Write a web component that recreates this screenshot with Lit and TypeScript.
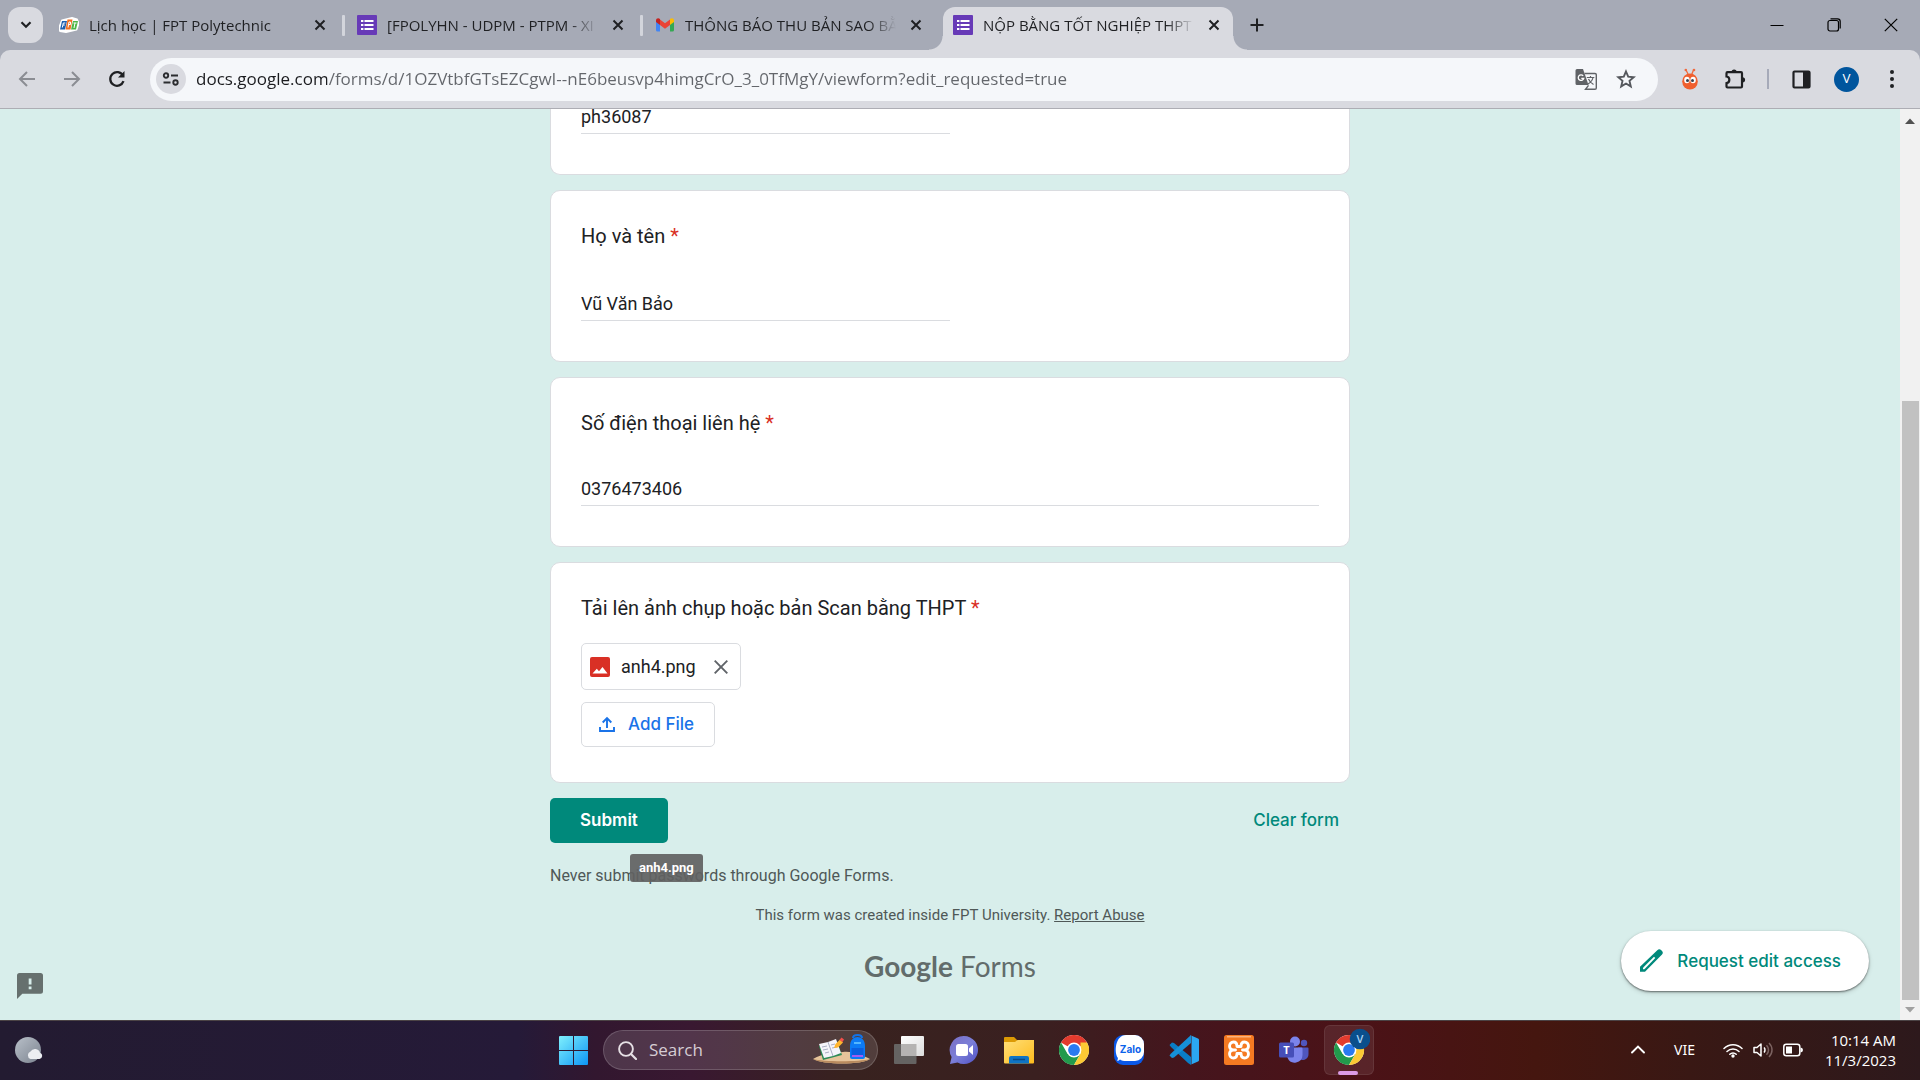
import { LitElement, html, svg, css, type TemplateResult } from "lit";
import { customElement } from "lit/decorators.js";
import { classMap } from "lit/directives/class-map.js";

const icon = (w: number, h: number, body: TemplateResult, box = `0 0 ${w} ${h}`) =>
  html`<svg width=${w} height=${h} viewBox=${box} fill="none" aria-hidden="true">${body}</svg>`;

const cross = (size: number, width: number, color: string) =>
  icon(size, size, svg`<path d="M1.5 1.5L10.5 10.5M10.5 1.5L1.5 10.5" stroke=${color} stroke-width=${width}/>`, "0 0 12 12");

const formsIcon = icon(20, 20, svg`
  <rect width="20" height="20" rx="1" fill="#673ab7"/>
  <path d="M4 5h2.400v2H4zM4 9h2.400v2H4zM4 13h2.400v2H4zM7.500 5H16.500v2H7.500zM7.500 9H16.500v2H7.500zM7.500 13H16.500v2H7.500z" fill="#fff"/>`);

const fptIcon = icon(20, 20, svg`
  <path d="M3 5.500L13 3l5 1.500 1.500 4-2 6L7 17l-6-1-.5-4z" fill="#fff" stroke="#fff" stroke-width="2" stroke-linejoin="round"/>
  <path d="M3 6h5l-2 8.500H1z" fill="#1f5fae"/><path d="M8.500 4.500h5L11.500 14.500H6.500z" fill="#f26f21"/><path d="M14 6h5l-2 8.500h-5z" fill="#4eb748"/>
  <path d="M3.300 12.500l1-4.500h2M4 10h1.700M9 12.500l1-5.500h1.500v2.500H10M14.500 8h3M16 8l-1 5" stroke="#fff" stroke-width="1"/>`);

const gmailIcon = icon(20, 20, svg`
  <path d="M1 5v10a1.500 1.500 0 0 0 1.500 1.500H5V8z" fill="#4285f4"/>
  <path d="M19 5v10a1.500 1.500 0 0 1-1.500 1.500H15V8z" fill="#34a853"/>
  <path d="M5 4.500l5 3.800 5-3.800V10l-5 3.800L5 10z" fill="#ea4335"/>
  <path d="M1 5.500C1 3.300 3.300 2.600 5 4v6L1 7z" fill="#c5221f"/>
  <path d="M19 5.500c0-2.200-2.300-2.900-4-1.500v6l4-3z" fill="#fbbc04"/>`);

const chromeBody = svg`
  <circle cx="15" cy="15" r="15" fill="#fff"/>
  <path d="M15 15L2 7.500A15 15 0 0 1 28 7.500z" fill="#e33b2e"/>
  <path d="M2 7.500A15 15 0 0 0 15 30L21.500 18.800 15 15 8.500 18.700z" fill="#229a4c"/>
  <path d="M28 7.500A15 15 0 0 1 15 30L21.500 18.800 21.500 7.500z" fill="#fcc934"/>
  <circle cx="15" cy="15" r="7.400" fill="#fff"/><circle cx="15" cy="15" r="5.900" fill="#2a7af0"/>`;

interface Tab { title: string; icon: TemplateResult; active?: boolean; divided?: boolean }

const TABS: Tab[] = [
  { title: "Lịch học | FPT Polytechnic", icon: fptIcon, divided: true },
  { title: "[FPOLYHN - UDPM - PTPM - XI", icon: formsIcon, divided: true },
  { title: "THÔNG BÁO THU BẢN SAO BẰ", icon: gmailIcon },
  { title: "NỘP BẰNG TỐT NGHIỆP THPT", icon: formsIcon, active: true },
];

@customElement("browser-tabs")
export class BrowserTabs extends LitElement {
  static styles = css`
    :host { display: block; background: #a6aab6; font: 15px/20px "Open Sans", "Noto Sans", sans-serif; color: #1f2023; }
    button { border: 0; padding: 0; background: none; color: inherit; font: inherit; display: flex; align-items: center; justify-content: center; }
    .strip { display: flex; height: 50px; align-items: center; padding-left: 8px; }
    .search { width: 35px; height: 36px; border-radius: 12px; background: #d9dae0; margin-right: 6px; flex: none; }
    .tabs { display: flex; gap: 8px; align-self: stretch; padding-top: 7px; min-width: 0; }
    .tab { position: relative; width: 290px; box-sizing: border-box; display: flex; align-items: center; gap: 10px; padding: 0 9px 7px 10px; border-radius: 12px 12px 0 0; }
    .select { flex: 1; min-width: 0; gap: 10px; justify-content: flex-start; }
    .title { flex: 1; min-width: 0; overflow: hidden; white-space: nowrap; text-align: left; -webkit-mask-image: linear-gradient(to left, transparent 0, #000 28px); mask-image: linear-gradient(to left, transparent 0, #000 28px); }
    .close { width: 20px; height: 20px; }
    .divided::after { content: ""; position: absolute; right: -6px; top: 8px; width: 3px; height: 21px; border-radius: 1px; background: #d3d5dc; }
    .active { background: #d9dae0; }
    .active::before, .active::after { content: ""; position: absolute; bottom: 0; width: 14px; height: 14px; }
    .active::before { right: 100%; background: radial-gradient(circle at 0 0, transparent 13px, #d9dae0 14px); }
    .active::after { left: 100%; background: radial-gradient(circle at 100% 0, transparent 13px, #d9dae0 14px); }
    .new { width: 28px; height: 28px; margin-left: 10px; }
    .window { margin-left: auto; display: flex; align-self: stretch; padding-right: 1px; }
    .window button { width: 57px; }
  `;
  render() {
    return html`<div class="strip">
      <button class="search" aria-label="Search tabs">${icon(12, 8, svg`<path d="M1.500 1.200L6 5.700l4.500-4.500" stroke="#1f2023" stroke-width="2.200"/>`)}</button>
      <div class="tabs">
        ${TABS.map((t) => html`<div class=${classMap({ tab: true, active: !!t.active, divided: !!t.divided })}>
          <button class="select">${t.icon}<span class="title">${t.title}</span></button>
          <button class="close" aria-label="Close tab">${cross(12, 2, "#1f2023")}</button>
        </div>`)}
      </div>
      <button class="new" aria-label="New tab">${icon(14, 14, svg`<path d="M7 .5v13M.5 7h13" stroke="#1f2023" stroke-width="2"/>`)}</button>
      <div class="window">
        <button aria-label="Minimize">${icon(14, 14, svg`<path d="M.5 7.500h13" stroke="#000"/>`)}</button>
        <button aria-label="Restore">${icon(14, 14, svg`<rect x="1" y="2.500" width="10.500" height="10.500" rx="2" stroke="#000" stroke-width="1.200"/><path d="M3.500 .8h7a2.700 2.700 0 0 1 2.700 2.700v7" stroke="#000" stroke-width="1.200"/>`)}</button>
        <button aria-label="Close">${icon(14, 14, svg`<path d="M.8.8l12.400 12.400M13.200.8L.8 13.200" stroke="#000" stroke-width="1.200"/>`)}</button>
      </div>
    </div>`;
  }
}

@customElement("browser-toolbar")
export class BrowserToolbar extends LitElement {
  static styles = css`
    :host { display: block; background: #a6aab6; font: 17px/22px "Open Sans", "Noto Sans", sans-serif; }
    button { border: 0; padding: 0; background: none; display: flex; align-items: center; justify-content: center; flex: none; }
    .bar { display: flex; align-items: center; height: 58px; padding: 0 6px 0 4px; background: #d9dae0; border-radius: 10px 10px 0 0; border-bottom: 1px solid #adadb4; }
    .tool { width: 45px; height: 40px; }
    .omnibox { flex: 1; display: flex; align-items: center; height: 43px; margin: 0 9px 0 11px; padding: 0 12px 0 6px; border-radius: 22px; background: #f5f7fa; }
    .site { width: 30px; height: 30px; border-radius: 15px; background: #d9dae0; margin-right: 10px; }
    .url { flex: 1; min-width: 0; border: 0; padding: 0; outline: 0; font: inherit; color: transparent; background: linear-gradient(90deg, #1b1c1f 131px, #63666b 131px); -webkit-background-clip: text; background-clip: text; }
    .action { width: 40px; height: 30px; }
    .rule { width: 2px; height: 20px; margin: 0 10px; background: #a6aab9; }
    .avatar { width: 25px; height: 25px; border-radius: 13px; background: #00559d; color: #fff; font-size: 12px; line-height: 25px; text-align: center; }
  `;
  render() {
    return html`<div class="bar">
      <button class="tool" aria-label="Back">${icon(18, 16, svg`<path d="M17 8H2.500M9 1L2 8l7 7" stroke="#8b8d93" stroke-width="2"/>`)}</button>
      <button class="tool" aria-label="Forward">${icon(18, 16, svg`<path d="M1 8h14.500M9 1l7 7-7 7" stroke="#8b8d93" stroke-width="2"/>`)}</button>
      <button class="tool" aria-label="Reload">${icon(18, 18, svg`<path d="M15.500 11.200A6.800 6.800 0 1 1 15 5.600" stroke="#1f2023" stroke-width="2.300"/><path d="M16.500 1v6.500H10z" fill="#1f2023"/>`)}</button>
      <div class="omnibox">
        <button class="site" aria-label="View site information">${icon(18, 14, svg`<circle cx="4" cy="3.500" r="2.200" stroke="#2b2c2f" stroke-width="1.900"/><path d="M9 3.500h7M1.500 10.500h7" stroke="#2b2c2f" stroke-width="2"/><circle cx="13.500" cy="10.500" r="2.200" stroke="#2b2c2f" stroke-width="1.900"/>`)}</button>
        <input class="url" type="text" aria-label="Address" .value=${"docs.google.com/forms/d/1OZVtbfGTsEZCgwI--nE6beusvp4himgCrO_3_0TfMgY/viewform?edit_requested=true"}>
        <button class="action" aria-label="Translate">${icon(22, 21, svg`
          <path d="M2 0h6l5.500 16H2a1.500 1.500 0 0 1-1.500-1.500v-13A1.500 1.500 0 0 1 2 0z" fill="#606367"/>
          <path d="M9.500 4.500H20a1.300 1.300 0 0 1 1.300 1.300V19A1.300 1.300 0 0 1 20 20.300h-9.500l3-4" stroke="#606367" stroke-width="1.400"/>
          <path d="M8.200 6.800a2.800 2.800 0 1 0 .6 2.500H6.300" stroke="#fff" stroke-width="1.300"/>
          <path d="M11.800 8.500h7.500M15.500 7v1.500M18 8.500c-.6 3-2.500 5-5 6.500M13.500 10c1 2.500 2.500 4 5 5.500" stroke="#606367" stroke-width="1.200"/>`)}</button>
        <button class="action" aria-label="Bookmark this tab">${icon(20, 20, svg`<path d="M10 2.500l2.200 5.200 5.600.5-4.300 3.700 1.300 5.500L10 14.500l-4.800 2.900 1.300-5.500L2.200 8.200l5.600-.5z" stroke="#55585d" stroke-width="1.900"/>`)}</button>
      </div>
      <button class="tool" aria-label="Extension">${icon(18, 22, svg`
        <path d="M5 2l2.500 5M12.500 2L10.500 7" stroke="#f0693c" stroke-width="1.300"/><circle cx="4.800" cy="2" r="1.300" fill="#f0693c"/><circle cx="13" cy="2" r="1.300" fill="#f0693c"/>
        <ellipse cx="9" cy="13.500" rx="7.800" ry="8" fill="#f0602f"/><ellipse cx="5.900" cy="12" rx="2.700" ry="3.300" fill="#fff"/><ellipse cx="12.100" cy="12" rx="2.700" ry="3.300" fill="#fff"/>
        <circle cx="6.500" cy="12.500" r="1.500" fill="#39424e"/><circle cx="11.500" cy="12.500" r="1.500" fill="#39424e"/>`)}</button>
      <button class="tool" aria-label="Extensions">${icon(22, 22, svg`
        <path d="M3.500 4.200H17a1 1 0 0 1 1 1V18.500a1 1 0 0 1-1 1H3.500a1 1 0 0 1-1-1v-3.300c3.800-.4 3.800-6.300 0-6.700V5.200a1 1 0 0 1 1-1z" stroke="#1f2023" stroke-width="2.200"/>
        <path d="M7.500 4a2.600 2.600 0 0 1 5.200 0zM18.500 9.200a2.600 2.600 0 0 1 0 5.200z" fill="#1f2023"/>`)}</button>
      <span class="rule"></span>
      <button class="tool" aria-label="Side panel">${icon(19, 19, svg`<rect x="1.500" y="1.500" width="16" height="16" rx="1" stroke="#1f2023" stroke-width="2.200"/><path d="M11 1h6.500v17H11z" fill="#1f2023"/>`)}</button>
      <button class="tool" aria-label="Profile"><span class="avatar">V</span></button>
      <button class="tool" aria-label="Menu">${icon(6, 20, svg`<circle cx="3" cy="3" r="2" fill="#1f2023"/><circle cx="3" cy="10" r="2" fill="#1f2023"/><circle cx="3" cy="17" r="2" fill="#1f2023"/>`)}</button>
    </div>`;
  }
}

@customElement("form-page")
export class FormPage extends LitElement {
  static styles = css`
    :host { display: flex; position: relative; min-height: 0; overflow: hidden; background: #d8eeeb; font-family: Roboto, sans-serif; color: #202124; }
    button { font: 500 17px/24px "Inter", sans-serif; cursor: pointer; }
    .scroll { flex: 1; overflow: hidden; display: flex; justify-content: center; }
    .form { width: 800px; max-width: 100%; margin: -11px 0 0; }
    .card { box-sizing: border-box; border: 1px solid #dadce0; border-radius: 10px; background: #fff; padding: 33px 30px 40px; margin-bottom: 15px; }
    .cut { padding-top: 0; border-top: 0; border-radius: 0 0 10px 10px; }
    .upload { padding-bottom: 35px; }
    .label { display: block; font-size: 20px; line-height: 24px; margin-bottom: 37px; }
    .wide .label { margin-bottom: 35px; }
    .upload .label { margin-bottom: 23px; }
    .req { color: #d93025; }
    .answer { display: block; box-sizing: border-box; width: 50%; height: 36px; border: 0; border-bottom: 1px solid #dadce0; padding: 2px 0 0; outline: 0; font: 18px/24px Roboto, sans-serif; color: #202124; background: none; }
    .wide .answer { width: 100%; }
    .files { display: flex; flex-direction: column; align-items: flex-start; gap: 12px; }
    .chip { display: flex; align-items: center; box-sizing: border-box; height: 47px; padding: 0 7px 0 8px; border: 1px solid #dadce0; border-radius: 5px; font-size: 18px; }
    .chip-name { margin: 0 13px 0 11px; }
    .remove { display: flex; align-items: center; justify-content: center; width: 24px; height: 24px; border: 0; padding: 0; background: none; }
    .add { display: flex; align-items: center; gap: 12px; height: 45px; box-sizing: border-box; padding: 0 20px 2px 16px; border: 1px solid #dadce0; border-radius: 5px; background: #fff; color: #1a73e8; }
    .actions { display: flex; justify-content: space-between; }
    .submit { height: 45px; padding: 0 30px 2px; border: 0; border-radius: 5px; background: #00897b; color: #fff; font-weight: 600; }
    .clear { height: 45px; padding: 0 11px 2px; border: 0; background: none; color: #00897b; }
    .warning { position: relative; margin: 21px 0 15px; font-size: 16px; line-height: 24px; color: #4f5857; }
    .tip { position: absolute; left: 80px; top: -10px; padding: 0 9px; border-radius: 3px; background: rgba(97, 97, 97, 0.92); color: #fff; font-weight: 700; font-size: 13px; line-height: 28px; }
    .origin { margin: 0 0 19px; text-align: center; font-size: 15px; line-height: 24px; color: #4f5857; }
    .origin a { color: inherit; }
    .logo { display: block; text-align: center; text-decoration: none; color: #626c6b; font: 28px/40px "Lato", sans-serif; }
    .logo b { font-weight: 700; }
    .report { position: absolute; left: 17px; bottom: 21px; padding: 0; border: 0; background: none; display: flex; }
    .request { position: absolute; right: 51px; bottom: 29px; display: flex; align-items: center; gap: 14px; height: 60px; padding: 0 28px 0 18px; border: 0; border-radius: 30px; background: #fff; color: #00897b; box-shadow: 0 1px 2px rgba(0, 0, 0, 0.5), 0 2px 5px rgba(0, 0, 0, 0.15); }
    .track { width: 20px; flex: none; box-sizing: border-box; background: #f1f1f1; display: flex; flex-direction: column; align-items: center; padding: 9px 0 7px; }
    .track-gap { flex: 280 0 0; }
    .thumb { flex: 605 0 0; width: 17px; background: #c1c1c1; margin-bottom: 7px; }
  `;

  private text(id: string, label: string, value: string, wide = false) {
    return html`<div class=${classMap({ card: true, wide })}>
      <label class="label" for=${id}>${label} <span class="req">*</span></label>
      <input class="answer" id=${id} type="text" .value=${value}>
    </div>`;
  }

  render() {
    return html`
      <div class="scroll">
        <form class="form" @submit=${(e: Event) => e.preventDefault()}>
          <div class="card cut"><input class="answer" type="text" aria-label="MSSV" .value=${"ph36087"}></div>
          ${this.text("name", "Họ và tên", "Vũ Văn Bảo")}
          ${this.text("phone", "Số điện thoại liên hệ", "0376473406", true)}
          <div class="card upload">
            <label class="label" for="add">Tải lên ảnh chụp hoặc bản Scan bằng THPT <span class="req">*</span></label>
            <div class="files">
              <div class="chip">
                ${icon(20, 20, svg`<rect width="20" height="20" rx="2" fill="#d93025"/><path d="M2.500 16.500l4.300-4.700 2.200 2.400 3.500-4.200 5 6.500z" fill="#fff"/>`)}
                <span class="chip-name">anh4.png</span>
                <button class="remove" type="button" aria-label="Remove file">${icon(16, 16, svg`<path d="M1.700 1.700l12.600 12.600M14.300 1.700L1.700 14.300" stroke="#5f6368" stroke-width="1.900"/>`)}</button>
              </div>
              <button class="add" id="add" type="button">
                ${icon(18, 18, svg`<path d="M2 12v4h14v-4M9 13V3.500M4.700 7.500L9 3.100 13.300 7.500" stroke="#1a73e8" stroke-width="1.900"/>`)}Add File
              </button>
            </div>
          </div>
          <div class="actions">
            <button class="submit" type="submit">Submit</button>
            <button class="clear" type="reset">Clear form</button>
          </div>
          <p class="warning">Never submit passwords through Google Forms.<span class="tip" role="tooltip">anh4.png</span></p>
          <p class="origin">This form was created inside FPT University. <a href="#report">Report Abuse</a></p>
          <a class="logo" href="#forms"><b>Google</b> Forms</a>
        </form>
      </div>
      <div class="track">
        ${icon(10, 6, svg`<path d="M0 6l5-5.500L10 6z" fill="#505050"/>`)}
        <span class="track-gap"></span><span class="thumb"></span>
        ${icon(10, 6, svg`<path d="M0 0l5 5.500L10 0z" fill="#a0a0a0"/>`)}
      </div>
      <button class="report" aria-label="Report a problem">${icon(26, 26, svg`<path d="M2.500 0h21A2.500 2.500 0 0 1 26 2.500v15.700a2.500 2.500 0 0 1-2.500 2.500H5.300L0 26V2.500A2.500 2.500 0 0 1 2.500 0z" fill="#66706e"/><path d="M11.700 5.500h2.800v6h-2.800zM11.700 13.500h2.800v2.700h-2.800z" fill="#d8eeeb"/>`)}</button>
      <button class="request">${icon(24, 24, svg`<path d="M18.300 1.300a2.800 2.800 0 0 1 4 0l.5.500a2.800 2.800 0 0 1 0 4L6 22.700H1v-5z" fill="#00897b"/><path d="M4 20.200v-1.400L15 7.800l1.300 1.300L5.400 20.200z" fill="#fff"/>`)}Request edit access</button>`;
  }
}

const APPS: { name: string; art: TemplateResult; open?: boolean }[] = [
  { name: "Task view", art: icon(30, 28, svg`
    <rect x="0" y="8" width="22.500" height="20" rx="1" fill="#656362"/><rect x="7" y="0" width="23" height="20" rx="1" fill="url(#tv)"/><rect x="7" y="8" width="15.500" height="12" fill="#b5b3b2"/>
    <defs><linearGradient id="tv" x1="0" y1="0" x2="1" y2="1"><stop stop-color="#fff"/><stop offset="1" stop-color="#dcdcdc"/></linearGradient></defs>`) },
  { name: "Chat", art: icon(30, 30, svg`
    <defs><linearGradient id="ch" x1="0" y1="0" x2="1" y2="1"><stop stop-color="#7a6fc4"/><stop offset=".5" stop-color="#7b7fd8"/><stop offset="1" stop-color="#4f50c5"/></linearGradient></defs>
    <path d="M15 1a14 14 0 1 1-6.500 26.400L1 29l1.600-7A14 14 0 0 1 15 1z" fill="url(#ch)"/><rect x="7" y="9" width="12" height="12" rx="2.500" fill="#fff"/><path d="M20 13.500l4-3.500v10l-4-3.500z" fill="#fff"/>`) },
  { name: "File Explorer", art: icon(30, 28, svg`
    <defs><linearGradient id="fe" x1="0" y1="0" x2="1" y2="1"><stop stop-color="#ffdf78"/><stop offset="1" stop-color="#fdbb1d"/></linearGradient></defs>
    <path d="M0 2a1 1 0 0 1 1-1h9l3 3v4H0z" fill="#dc9a04"/><path d="M0 6h11l2.500-2H30v22.500a1 1 0 0 1-1 1H1a1 1 0 0 1-1-1z" fill="url(#fe)"/>
    <path d="M5 27.500V22a2 2 0 0 1 2-2h16a2 2 0 0 1 2 2v5.500z" fill="#0f74c4"/><path d="M9 23.500h12" stroke="#0a4a86" stroke-width="1.500"/>`) },
  { name: "Chrome", art: icon(30, 30, chromeBody) },
  { name: "Zalo", art: icon(30, 30, svg`
    <rect width="30" height="30" rx="9" fill="#0a58e8"/><path d="M12 0h9a9 9 0 0 1 9 9v8a9 9 0 0 1-9 9h-8.500c-3 0-5-.5-6.500-1.500-1 1-1.700 1.300-3 1.200.8-1 1-2 .8-3C0 18 1 0 12 0z" fill="#fff"/>
    <text x="16.500" y="17.500" text-anchor="middle" font-family="Inter, sans-serif" font-weight="700" font-size="10" fill="#0a62ea">Zalo</text>`) },
  { name: "Visual Studio Code", art: icon(30, 30, svg`
    <path d="M22 0v30l-3-2L2 12l-1.500-2 2.500-2.500 2 .5L22 22z" fill="#0a7dc6"/><path d="M22 0L2 18.500.5 20.500 3 23l2-.5L22 8z" fill="#1690d8"/><path d="M21 0l8 3.500a1.500 1.500 0 0 1 1 1.500v20a1.500 1.500 0 0 1-1 1.500L21 30c1 0 1.500-.7 1.500-1.700V1.700C22.500.7 22 0 21 0z" fill="#2ba7f2"/>`) },
  { name: "XAMPP", art: icon(30, 30, svg`
    <rect width="30" height="30" rx="2.500" fill="#f57a22"/><path d="M3 1h24v1.500H3z" fill="#fbb27c"/>
    <path d="M9.500 15C4 15 4.500 7 9.500 7c3.500 0 3.500 3 3.500 4.500h4C17 10 17 7 20.500 7c5 0 5.500 8 0 8 5.500 0 5 8 0 8-3.500 0-3.500-3-3.500-4.500h-4c0 1.500 0 4.500-3.500 4.500-5 0-5.500-8 0-8zM9.500 15h2M18.500 15h2" stroke="#fff" stroke-width="2.900" stroke-linejoin="round" stroke-linecap="round"/>`) },
  { name: "Teams", art: icon(30, 28, svg`
    <circle cx="25" cy="7" r="3.200" fill="#4f56bd"/><circle cx="16" cy="5.500" r="5" fill="#7b83eb"/><path d="M19 11.500h9.500a1 1 0 0 1 1 1V18a6 6 0 0 1-10.500 4z" fill="#4f56bd"/>
    <path d="M9 11.500h13.500a1 1 0 0 1 1 1V19a7.800 7.800 0 0 1-15 2.800z" fill="#7b83eb"/><rect x="0" y="6.500" width="15" height="15" rx="1.500" fill="#464eb8"/>
    <text x="7.500" y="18" text-anchor="middle" font-family="Open Sans, sans-serif" font-weight="700" font-size="11" fill="#fff">T</text>`) },
  { name: "Chrome - V", open: true, art: icon(42, 40, svg`
    <g transform="translate(6 9)">${chromeBody}</g><circle cx="32" cy="13" r="10.300" fill="#0a4f8c"/>
    <text x="32" y="17" text-anchor="middle" font-family="Open Sans, sans-serif" font-weight="600" font-size="11" fill="#a9d3f5">V</text>`) },
];

@customElement("task-bar")
export class TaskBar extends LitElement {
  static styles = css`
    :host { display: block; font: 15px/20px "Noto Sans", sans-serif; color: #fff; }
    button { border: 0; padding: 0; background: none; color: inherit; font: inherit; display: flex; align-items: center; justify-content: center; }
    .bar { display: grid; grid-template-columns: 1fr auto 1fr; height: 60px; box-sizing: border-box; border-top: 1px solid #4b4345; background: linear-gradient(90deg, #231b31 0, #251a38 27%, #32172f 31%, #391831 36%, #38221f 44%, #3a2020 54%, #45151d 62%, #4b1217 71%, #45160f 80%, #391814 88%, #2d191c 100%); }
    .weather { justify-self: start; width: 58px; }
    .apps { display: flex; align-items: center; padding-left: 2px; padding-bottom: 1px; }
    .app { width: 55px; height: 58px; }
    .open { position: relative; }
    .slot { display: flex; align-items: center; justify-content: center; width: 48px; height: 48px; border: 1px solid transparent; border-radius: 6px; }
    .open .slot { background: rgba(255, 255, 255, 0.08); border-color: rgba(255, 255, 255, 0.08); }
    .open .slot svg { margin-top: -8px; }
    .open::after { content: ""; position: absolute; left: 17px; bottom: 4px; width: 20px; height: 4px; border-radius: 2px; background: #dc9be6; }
    .search { display: flex; align-items: center; box-sizing: border-box; width: 275px; height: 40px; margin: 0 3px 0 2px; padding: 0 7px 0 14px; border: 1px solid rgba(255, 255, 255, 0.17); border-radius: 20px; background: rgba(255, 255, 255, 0.13); }
    .query { flex: 1; min-width: 0; margin-left: 12px; border: 0; padding: 0; outline: 0; background: none; font: 17px/22px "Open Sans", "Noto Sans", sans-serif; color: #fff; }
    .query::placeholder { color: #d6cdd4; opacity: 1; }
    .tray { justify-self: end; display: flex; align-items: center; padding: 0 24px 2px 0; }
    .chevron { width: 40px; height: 40px; margin-right: 16px; }
    .lang { font-size: 14px; margin-right: 28px; }
    .status { gap: 10px; margin-right: 22px; }
    .clock { display: block; text-align: right; font: 15px/20px "Open Sans", "Noto Sans", sans-serif; }
  `;
  render() {
    return html`<div class="bar">
      <button class="weather" aria-label="Weather">${icon(28, 28, svg`
        <defs><linearGradient id="moon" x1="0" y1="0" x2="1" y2="1"><stop stop-color="#b9c0c9"/><stop offset="1" stop-color="#7b838f"/></linearGradient></defs>
        <circle cx="13" cy="13" r="13" fill="url(#moon)"/><path d="M15.500 22a4 4 0 0 1 0-7.500 5.200 5.200 0 0 1 9.500 1.300 3.200 3.200 0 0 1-.5 6.200z" fill="#eceef2"/>`)}</button>
      <div class="apps">
        <button class="app" aria-label="Start">${icon(29, 29, svg`
          <defs><linearGradient id="win" gradientUnits="userSpaceOnUse" x1="0" y1="0" x2="29" y2="29"><stop stop-color="#7ff0fd"/><stop offset="1" stop-color="#0d95f5"/></linearGradient></defs>
          <path d="M1 0h13v14H0V1a1 1 0 0 1 1-1zM15 0h13a1 1 0 0 1 1 1v13H15zM0 15h14v14H1a1 1 0 0 1-1-1zM15 15h14v13a1 1 0 0 1-1 1H15z" fill="url(#win)"/>`)}</button>
        <label class="search">
          ${icon(19, 19, svg`<circle cx="8" cy="8" r="6.900" stroke="#e6e0e5" stroke-width="1.900"/><path d="M13 13l5 5" stroke="#e6e0e5" stroke-width="2.200" stroke-linecap="round"/>`)}
          <input class="query" type="text" placeholder="Search" aria-label="Search">
          ${icon(57, 32, svg`
            <path d="M0 25C10 19 22 19 30 18c10-1 18 3 27 7-8 6-47 6-57 0z" fill="#e6c49a"/><path d="M0 25c10 3 47 3 57 0-8 6-47 6-57 0z" fill="#b98b5e"/>
            <path d="M6 12l18-5 5 14-19 5z" fill="#2e8b57"/><path d="M6 10l9-2 5 14-9 2zM15 8l8-3 5 14-8 3z" fill="#f4f4fa"/><path d="M15 8l5 14M9 13l5-1M10 16l5-1M12 19l4-1M18 11l4-1M19 14l5-1" stroke="#a9adc2"/>
            <path d="M21 14l1.500-4 4.500-4.500 3 3-5 5z" fill="#ffb52e"/><path d="M26.500 6l2-2.500 2.500 2L29.500 8z" fill="#f2504b"/>
            <path d="M40 4c0-4 9-4 9 0" stroke="#1373e6" stroke-width="2"/><path d="M37 12c0-12 15-12 15 0v11a2 2 0 0 1-2 2H39a2 2 0 0 1-2-2z" fill="#0c7bf5"/><path d="M38.500 14h12v8h-12z" fill="#0a5fe0"/><path d="M39 22h11" stroke="#a45bf0" stroke-width="2"/><path d="M41 9h7" stroke="#53b7ff" stroke-width="2"/>`)}
        </label>
        ${APPS.map((a) => html`<button class=${classMap({ app: true, open: !!a.open })} aria-label=${a.name}><span class="slot">${a.art}</span></button>`)}
      </div>
      <div class="tray">
        <button class="chevron" aria-label="Show hidden icons">${icon(14, 9, svg`<path d="M1 7.500l6-6 6 6" stroke="#fff" stroke-width="1.900" stroke-linecap="round"/>`)}</button>
        <button class="lang">VIE</button>
        <button class="status" aria-label="Network, sound and battery">
          ${icon(20, 16, svg`<path d="M1 6.500a12.700 12.700 0 0 1 18 0M4 9.500a8.500 8.500 0 0 1 12 0M6.800 12.300a4.500 4.500 0 0 1 6.400 0" stroke="#fff" stroke-width="1.500" stroke-linecap="round"/><circle cx="10" cy="14" r="1.700" fill="#fff"/>`)}
          ${icon(20, 16, svg`<path d="M1 5.500h3L8 2v12l-4-3.500H1z" stroke="#fff" stroke-width="1.500" stroke-linejoin="round"/><path d="M11 5.500c1.300 1.300 1.300 3.700 0 5" stroke="#fff" stroke-width="1.500"/><path d="M13.500 3.300c2.700 2.700 2.700 6.700 0 9.400M16 1c4 4 4 10 0 14" stroke="#7b6260" stroke-width="1.500"/>`)}
          ${icon(20, 14, svg`<rect x=".8" y="1.300" width="16" height="11.500" rx="2.500" stroke="#fff" stroke-width="1.500"/><rect x="3" y="3.500" width="6" height="7" fill="#fff"/><path d="M17.500 4.500a2.500 2.500 0 0 1 0 5z" fill="#fff"/>`)}
        </button>
        <button class="clock"><time>10:14 AM<br>11/3/2023</time></button>
      </div>
    </div>`;
  }
}

@customElement("app-root")
export class AppRoot extends LitElement {
  static styles = css`
    :host { display: block; }
    .screen { display: grid; grid-template-rows: auto auto minmax(0, 1fr) auto; height: 100vh; overflow: hidden; }
  `;
  render() {
    return html`<div class="screen"><browser-tabs></browser-tabs><browser-toolbar></browser-toolbar><form-page></form-page><task-bar></task-bar></div>`;
  }
}
